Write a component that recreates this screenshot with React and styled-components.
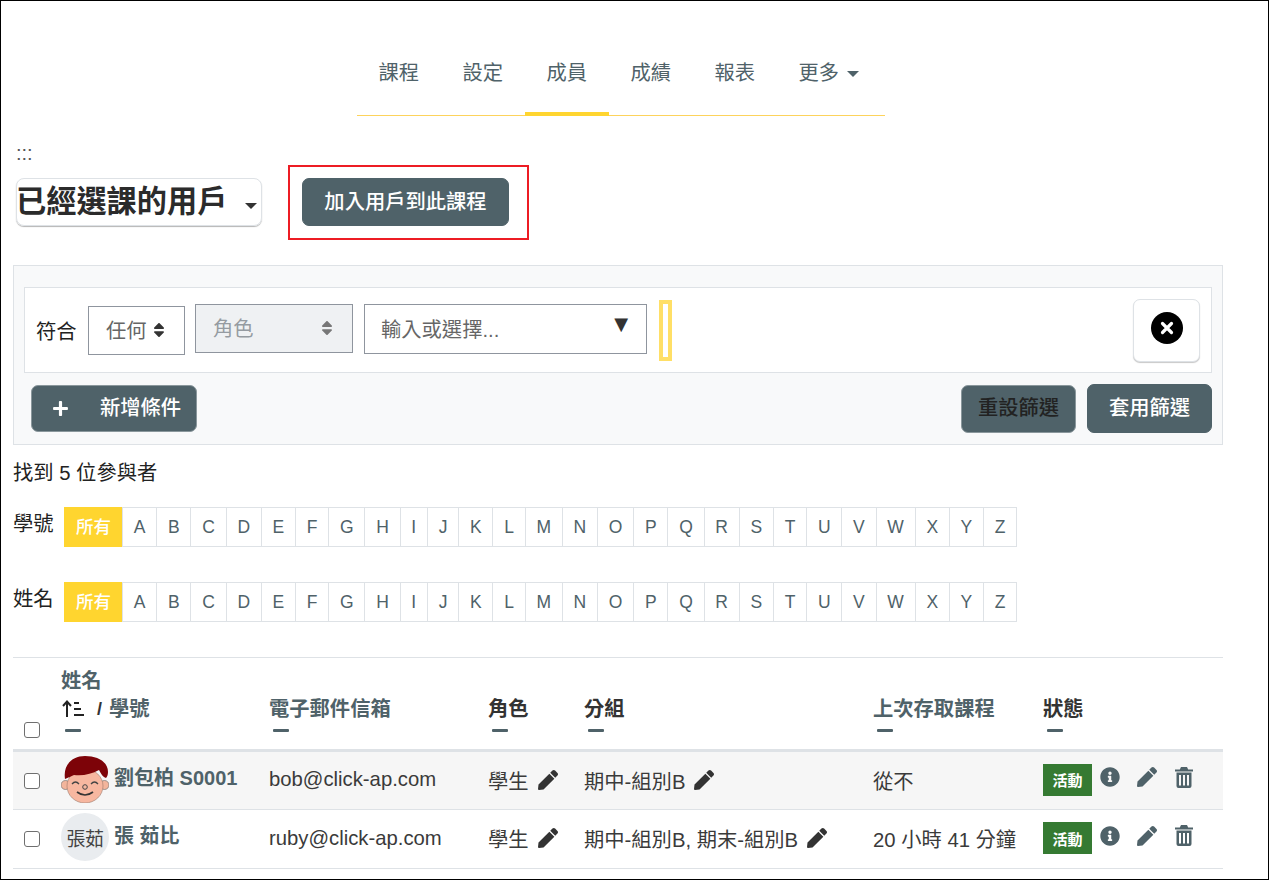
import React from "react";
import styled, { createGlobalStyle } from "styled-components";
import { FaSort, FaPlus, FaPen, FaInfoCircle } from "react-icons/fa";

const Global = createGlobalStyle`
  html, body { margin: 0; padding: 0; background: #fff; }
  body { font-family: "Liberation Sans", "Noto Sans CJK TC", sans-serif; font-size: 20.3px; color: #333; }
  * { box-sizing: border-box; }
`;
const slate = "#4f6269";
const line = "#dee2e6";
const yellow = "#ffd52f";

const Frame = styled.div`
  height: 880px; border: 1px solid #000; padding: 0 45px 0 12px; overflow: hidden;
`;
const Nav = styled.nav`
  display: flex; width: 528px; height: 86px; margin: 29px 0 0 344px; border-bottom: 1px solid #fdd35c;
`;
const Tab = styled.a`
  display: flex; align-items: flex-start; flex: none; width: ${p => p.$w || 84}px; padding: 28px 0 0 21.5px; height: 86px; line-height: 30px; color: ${slate};
  border-bottom: ${p => (p.$active ? `4px solid ${yellow}` : "0")};
`;
const Caret = styled.span`
  display: inline-block; flex: none; width: 0; height: 0; margin: ${p => p.$m};
  border-left: 6.5px solid transparent; border-right: 6.5px solid transparent;
  border-top: 6px solid ${p => p.$c};
`;
const Grip = styled.div`
  margin: 30px 0 0 3px; height: 19px; font-size: 20px; line-height: 14px; color: #555;
`;
const ToolRow = styled.div`
  display: flex; align-items: flex-start; height: 75px; gap: 26px;
`;
const BarSelect = styled.div`
  display: flex; align-items: center; width: 246px; height: 48px; margin: 13px 0 0 3px; padding: 0;
  border: 1px solid ${line}; border-radius: 8px; box-shadow: 0 1px 1px #b5b5b5;
  font-size: 30.2px; font-weight: 700; color: #2b2b2b; line-height: 44px;
  span:first-child { margin-left: -1px; }
`;
const Callout = styled.div`
  width: 241px; height: 75px; border: 2px solid #ed1c24; padding: 11px 0 0 12px;
`;
const Btn = styled.button`
  height: ${p => p.$h || 48}px; width: ${p => p.$w}px; padding: 0; border: 1px solid ${p => p.$edge || slate}; border-radius: 7px;
  background: ${slate}; color: ${p => (p.$dark ? "#222" : "#fff")}; font: inherit; font-weight: 500; line-height: 1;
  display: flex; align-items: center; justify-content: center; flex: none;
`;
const Panel = styled.section`
  margin-top: 25px; height: 180px; padding: 21px 10px 11px; background: #f8f9fa; border: 1px solid ${line};
`;
const Rule = styled.div`
  display: flex; align-items: center; height: 86px; padding: 0 11px; background: #fff; border: 1px solid ${line};
`;
const Match = styled.span`flex: none; width: 52px; color: #222;`;
const Field = styled.div`
  display: flex; align-items: center; flex: none; height: ${p => p.$h}px; width: ${p => p.$w}px;
  margin: 0 ${p => p.$mr}px ${p => p.$up || 0}px 0; padding: 0 ${p => p.$pr}px 2px ${p => p.$pl}px;
  border: 1px solid #8f959e; background: ${p => (p.$off ? "#eff1f3" : "#fff")};
  color: ${p => (p.$off ? "#959ba1" : "#666")}; justify-content: space-between;
  svg { font-size: 18px; margin-top: 2px; color: ${p => (p.$off ? "#777" : "#333")}; }
`;
const Tri = styled.span`
  font-family: "DejaVu Sans", sans-serif; font-size: 18px; color: #333; line-height: 1; margin-top: -8px;
`;
const Focus = styled.div`
  flex: none; width: 13px; height: 61px; border: 4px solid #ffdf66;
`;
const Remove = styled.button`
  display: flex; align-items: center; justify-content: center; margin-left: auto; flex: none;
  width: 67px; height: 63px; background: #fff; border: 1px solid ${line}; border-radius: 7px;
  box-shadow: 0 1px 1px #c8c8c8; padding: 0 0 4px;
`;
const Actions = styled.div`
  display: flex; align-items: center; margin-top: 11px; padding-left: 7px; gap: 11px;
`;
const Add = styled(Btn)`
  justify-content: flex-start; padding-left: 20px; gap: 31px; margin-right: auto;
  svg { font-size: 17px; }
`;
const Found = styled.div`
  margin-top: 16px; line-height: 24px; color: #222;
`;
const Initials = styled.div`
  display: flex; margin-top: ${p => p.$mt}px; height: 40px;
`;
const InitLabel = styled.div`
  width: 51px; line-height: 34px; color: #222;
`;
const Cell = styled.a`
  display: flex; align-items: center; justify-content: center; height: 40px; margin-left: -1px;
  padding: 0 10.78px; border: 1px solid ${line}; font-size: 17.5px; color: ${slate};
  ${p => p.$on && `background: ${yellow}; border-color: ${yellow}; color: #fff; width: 59px; margin-left: 0; padding-bottom: 3px; font-weight: 500;`}
`;
const Table = styled.table`
  width: 1210px; margin-top: 35px; border-collapse: collapse; table-layout: fixed;
`;
const Head = styled.th`
  height: 93px; padding: 0 12px 16px; text-align: left; vertical-align: bottom; font-weight: 700; line-height: 28px;
  color: ${p => (p.$dark ? "#333" : slate)}; border-top: 1px solid ${line}; border-bottom: 3px solid ${line};
  ${p => p.$box && "padding: 0 0 11px 11px;"}
`;
const Dash = styled.i`
  display: block; width: 16px; height: 3px; margin: 6px 0 1px 4px; border-radius: 1px; background: ${slate};
`;
const SortLine = styled.div`
  display: flex; align-items: center;
`;
const SortIcon = styled.svg`
  flex: none; margin: 0 13px 0 1px;
`;
const Slash = styled.span`
  color: #333; font-size: 18px; margin-right: 7px;
`;
const Row = styled.tr`
  background: ${p => (p.$alt ? "#f6f6f6" : "#fff")};
`;
const Td = styled.td`
  height: 59px; padding: 0 12px 2px; border-bottom: 1px solid ${line}; color: #3a3a3a; white-space: nowrap;
  ${p => p.$box && "padding: 0 0 0 11px;"}
`;
const Check = styled.input.attrs({ type: "checkbox" })`
  appearance: none; display: block; width: 16px; height: 16px; margin: 0; border: 1px solid #6f6f6f; border-radius: 3px; background: #fff;
`;
const Person = styled.div`
  display: flex; align-items: center; gap: 5px; font-weight: 700; font-size: 20px; color: ${slate};
  span { margin-top: -7px; }
`;
const Avatar = styled.div`
  flex: none; display: flex; align-items: center; justify-content: center; width: 48px; height: 48px; border-radius: 50%;
  margin-top: -2px; background: ${p => (p.$bare ? "transparent" : "#e9ecef")}; font-size: 19px; font-weight: 400; color: #444; letter-spacing: -0.5px;
`;
const Inline = styled.div`
  display: flex; align-items: center; gap: 9px;
  svg { font-size: 20px; color: #333; flex: none; }
`;
const Status = styled.div`
  display: flex; align-items: center;
`;
const Badge = styled.span`
  display: flex; align-items: center; justify-content: center; width: 49px; height: 32px; margin-right: -1px; background: #357a32; color: #fff;
  font-size: 15px; font-weight: 700;
`;
const Act = styled.span`
  display: flex; align-items: center; justify-content: center; width: 37px; font-size: 20px; color: ${slate}; margin-top: -5px;
`;

const Face = () => (
  <svg width="48" height="48" viewBox="0 0 48 48">
    <circle cx="4.5" cy="30" r="4.5" fill="#f3b59c" stroke="#777" strokeWidth=".7" />
    <circle cx="43.5" cy="30" r="4.5" fill="#f3b59c" stroke="#777" strokeWidth=".7" />
    <ellipse cx="24" cy="31" rx="18" ry="17" fill="#f7b7a0" stroke="#8a6a5c" strokeWidth=".5" />
    <path d="M4 24C2 11 10 1 24 1c13 0 23 6 23 16 0 3-1 5-2 6-3-1-5-4-7-8-7 4-16 6-25 5-2 1-5 2-9 4z" fill="#7d0308" />
    <path d="M11 29q3.5-4 7 0M30 29q3.5-4 7 0" stroke="#444" strokeWidth="1.3" fill="none" />
    <circle cx="24" cy="32" r="2.3" fill="#f7b7a0" stroke="#444" strokeWidth="1" />
    <path d="M16 37q8 6 16 0" stroke="#333" strokeWidth="1.7" fill="none" />
  </svg>
);
const CloseIcon = () => (
  <svg width="32" height="32" viewBox="0 0 32 32">
    <circle cx="16" cy="16" r="16" fill="#000" />
    <path d="M11.5 11.5l9 9M20.5 11.5l-9 9" stroke="#fff" strokeWidth="3.2" strokeLinecap="round" />
  </svg>
);
const TrashIcon = () => (
  <svg width="18" height="21" viewBox="0 0 18 21" fill={slate}>
    <path d="M6 0h6l1.2 2.4H18v2H0v-2h4.8z" />
    <path d="M1.5 5.5h15V19a2 2 0 0 1-2 2h-11a2 2 0 0 1-2-2zM4 8v10.5h2V8zm4 0v10.5h2V8zm4 0v10.5h2V8z" fillRule="evenodd" />
  </svg>
);

const letters = "ABCDEFGHIJKLMNOPQRSTUVWXYZ".split("");
const InitialsBar = ({ label, mt }) => (
  <Initials $mt={mt}>
    <InitLabel>{label}</InitLabel>
    <Cell $on>所有</Cell>
    {letters.map(l => <Cell key={l}>{l}</Cell>)}
  </Initials>
);
const Actionset = () => (
  <Status>
    <Badge>活動</Badge>
    <Act><FaInfoCircle /></Act>
    <Act><FaPen /></Act>
    <Act><TrashIcon /></Act>
  </Status>
);

export default function App() {
  return (
    <Frame>
      <Global />
      <Nav>
        <Tab>課程</Tab><Tab>設定</Tab><Tab $active>成員</Tab><Tab>成績</Tab><Tab>報表</Tab>
        <Tab $w={108}>更多<Caret $m="13px 0 0 8px" $c={slate} /></Tab>
      </Nav>
      <Grip>:::</Grip>
      <ToolRow>
        <BarSelect><span>已經選課的用戶</span><Caret $m="8px 0 0 18px" $c="#333" /></BarSelect>
        <Callout><Btn $w={207}>加入用戶到此課程</Btn></Callout>
      </ToolRow>
      <Panel>
        <Rule>
          <Match>符合</Match>
          <Field $w={97} $h={49} $mr={10} $pl={17} $pr={16}>任何<FaSort /></Field>
          <Field $off $up={4} $w={158} $h={49} $mr={11} $pl={17} $pr={16}>角色<FaSort /></Field>
          <Field $up={2} $w={283} $h={50} $mr={12} $pl={16} $pr={18}>輸入或選擇...<Tri>▼</Tri></Field>
          <Focus />
          <Remove><CloseIcon /></Remove>
        </Rule>
        <Actions>
          <Add $w={166} $h={47} $edge="#8a979c"><FaPlus />新增條件</Add>
          <Btn $w={115} $h={48} $dark $edge="#8a979c">重設篩選</Btn>
          <Btn $w={125} $h={49}>套用篩選</Btn>
        </Actions>
      </Panel>
      <Found>找到 5 位參與者</Found>
      <InitialsBar label="學號" mt={22} />
      <InitialsBar label="姓名" mt={35} />
      <Table>
        <colgroup>
          <col width="36" /><col width="208" /><col width="219" /><col width="96" /><col width="289" /><col width="170" /><col width="192" />
        </colgroup>
        <thead>
          <tr>
            <Head $box><Check /></Head>
            <Head>
              姓名
              <SortLine>
                <SortIcon width="22" height="18" viewBox="0 0 22 18">
                  <path d="M5 17V2M1 6l4-4.5L9 6" stroke="#222" strokeWidth="2" fill="none" />
                  <path d="M12 3h5M12 9h7M12 15h10" stroke="#222" strokeWidth="2" />
                </SortIcon>
                <Slash>/</Slash>學號
              </SortLine>
              <Dash />
            </Head>
            <Head>電子郵件信箱<Dash /></Head>
            <Head $dark>角色<Dash /></Head>
            <Head $dark>分組<Dash /></Head>
            <Head>上次存取課程<Dash /></Head>
            <Head $dark>狀態<Dash /></Head>
            <Head />
          </tr>
        </thead>
        <tbody>
          <Row $alt>
            <Td $box><Check /></Td>
            <Td><Person><Avatar $bare><Face /></Avatar><span>劉包柏 S0001</span></Person></Td>
            <Td>bob@click-ap.com</Td>
            <Td><Inline>學生<FaPen /></Inline></Td>
            <Td><Inline>期中-組別B<FaPen /></Inline></Td>
            <Td>從不</Td>
            <Td colSpan={2}><Actionset /></Td>
          </Row>
          <Row>
            <Td $box><Check /></Td>
            <Td><Person><Avatar>張茹</Avatar><span>張 茹比</span></Person></Td>
            <Td>ruby@click-ap.com</Td>
            <Td><Inline>學生<FaPen /></Inline></Td>
            <Td><Inline>期中-組別B, 期末-組別B<FaPen /></Inline></Td>
            <Td>20 小時 41 分鐘</Td>
            <Td colSpan={2}><Actionset /></Td>
          </Row>
        </tbody>
      </Table>
    </Frame>
  );
}
